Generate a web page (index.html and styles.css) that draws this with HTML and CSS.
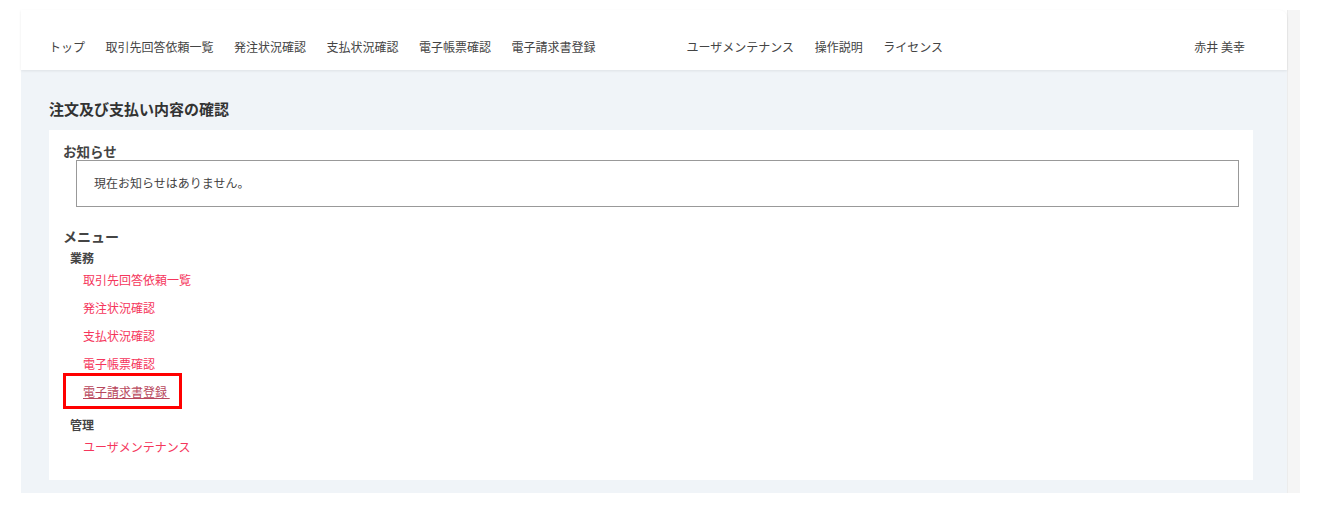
FILE: index.html
```html
<!DOCTYPE html>
<html lang="ja">
<head>
  <meta charset="UTF-8">
  <title>注文及び支払い内容の確認</title>
  <meta name="viewport" content="width=device-width, initial-scale=1">
  <link rel="stylesheet" href="styles.css">
</head>
<body>
  <div class="frame">
    <div class="main">
      <header class="header">
        <nav class="nav">
          <a href="#">トップ</a>
          <a href="#">取引先回答依頼一覧</a>
          <a href="#">発注状況確認</a>
          <a href="#">支払状況確認</a>
          <a href="#">電子帳票確認</a>
          <a href="#">電子請求書登録</a>
        </nav>
        <nav class="nav nav--sub">
          <a href="#">ユーザメンテナンス</a>
          <a href="#">操作説明</a>
          <a href="#">ライセンス</a>
        </nav>
        <div class="user">赤井 美幸</div>
      </header>
      <div class="content">
        <h1 class="page-title">注文及び支払い内容の確認</h1>
        <div class="card">
          <h2 class="section-title">お知らせ</h2>
          <div class="notice">現在お知らせはありません。</div>
          <h2 class="section-title section-title--menu">メニュー</h2>
          <div class="group-title">業務</div>
          <ul class="menu">
            <li><a href="#">取引先回答依頼一覧</a></li>
            <li><a href="#">発注状況確認</a></li>
            <li><a href="#">支払状況確認</a></li>
            <li><a href="#">電子帳票確認</a></li>
            <li class="marked"><a href="#" class="visited">電子請求書登録&nbsp;</a><span class="mark"></span></li>
          </ul>
          <div class="group-title group-title--next">管理</div>
          <ul class="menu">
            <li><a href="#">ユーザメンテナンス</a></li>
          </ul>
        </div>
      </div>
    </div>
    <div class="scroll"></div>
  </div>
</body>
</html>
```

FILE: styles.css
```css
body {
  margin: 0;
  background-color: #fff;
  font-family: "Noto Sans CJK JP", "Noto Sans", sans-serif;
  color: #333;
}
.frame {
  display: flex;
  margin: 10px 0 0 21px;
  width: 1279px;
}
.main {
  flex: 1;
  display: flex;
  flex-direction: column;
}
.scroll {
  width: 12px;
  background-color: #f5f5f5;
  border-left: 1px solid #ececec;
}
.header {
  display: flex;
  align-items: flex-start;
  height: 60px;
  padding: 27px 42px 0 28px;
  box-sizing: border-box;
  background-color: #fff;
  border-top-right-radius: 8px;
  box-shadow: 0 1px 3px rgba(0, 0, 0, 0.08);
  position: relative;
  z-index: 1;
}
.nav {
  display: flex;
  gap: 20.5px;
}
.nav a, .user {
  font-size: 12px;
  line-height: 20px;
  color: #444;
  text-decoration: none;
}
.nav--sub {
  margin-left: 91px;
}
.user {
  margin-left: auto;
}
.content {
  background-color: #f0f4f8;
  padding: 29px 34px 13px 28px;
}
.page-title {
  margin: 0 0 11px;
  font-size: 15px;
  line-height: 20px;
  font-weight: bold;
  color: #333;
}
.card {
  background-color: #fff;
  padding: 12px 14px 19px 14px;
}
.section-title {
  margin: 0;
  font-size: 13.5px;
  line-height: 18px;
  font-weight: bold;
  color: #444;
}
.section-title--menu {
  margin-top: 19px;
  font-size: 14px;
  line-height: 20px;
}
.notice {
  margin-left: 13px;
  height: 47px;
  box-sizing: border-box;
  border: 1.5px solid #999;
  padding: 0 17px;
  font-size: 12px;
  line-height: 44px;
  color: #444;
}
.group-title {
  margin: 4px 0 0 7px;
  font-size: 12px;
  line-height: 16px;
  font-weight: bold;
  color: #444;
}
.group-title--next {
  margin-top: 11px;
}
.menu {
  list-style: none;
  margin: 0;
  padding: 0 0 0 20px;
}
.menu li {
  font-size: 12px;
  line-height: 28px;
}
.menu a {
  color: #f5365c;
  text-decoration: none;
}
.menu a.visited {
  color: #b8475d;
  text-decoration: underline;
}
.marked {
  position: relative;
}
.mark {
  position: absolute;
  left: -20px;
  top: -5px;
  width: 119px;
  height: 36px;
  box-sizing: border-box;
  border: 3px solid #ff0000;
}
```
